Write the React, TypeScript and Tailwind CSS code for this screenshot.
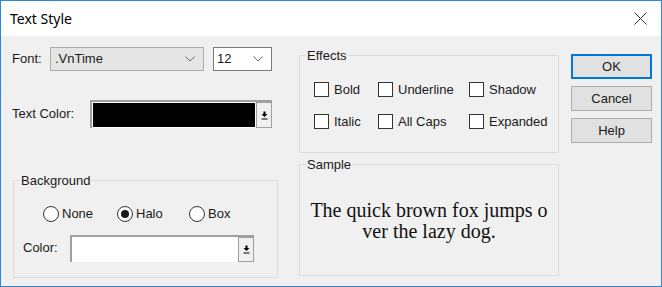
import React from 'react';

const Chevron: React.FC = () => (
  <svg width="10" height="6" viewBox="0 0 10 6" className="shrink-0">
    <polyline points="0.5,0.5 5,5 9.5,0.5" fill="none" stroke="#6b6b6b" strokeWidth="1" />
  </svg>
);

const DropButton: React.FC = () => (
  <div className="flex h-full w-[16px] shrink-0 items-center justify-center border border-[#a0a0a0] bg-[#f0f0f0]">
    <svg width="7" height="9" viewBox="0 0 7 9">
      <path d="M3.5 6 L0.5 3 H2.5 V0.5 H4.5 V3 H6.5 Z" fill="#000" />
      <rect x="0.5" y="7.5" width="6" height="1" fill="#000" />
    </svg>
  </div>
);

const Check: React.FC<{ label: string }> = ({ label }) => (
  <label className="flex items-center gap-[5px]">
    <span className="h-[15px] w-[15px] border border-[#333] bg-white" />
    <span>{label}</span>
  </label>
);

const Radio: React.FC<{ label: string; checked?: boolean }> = ({ label, checked }) => (
  <label className="flex items-center gap-[3px]">
    <span className="flex h-[16px] w-[16px] items-center justify-center rounded-full border border-[#333] bg-white">
      {checked && <span className="h-[8px] w-[8px] rounded-full bg-[#1a1a1a]" />}
    </span>
    <span>{label}</span>
  </label>
);

const Group: React.FC<{ title: string; className: string; children: React.ReactNode }> = ({
  title,
  className,
  children,
}) => (
  <fieldset className={`border border-[#dcdcdc] ${className}`}>
    <legend className="ml-[6px] px-[1px] leading-[15px]">{title}</legend>
    {children}
  </fieldset>
);

const App: React.FC = () => (
  <div
    className="flex h-[287px] w-[662px] flex-col border border-[#2b87d3] bg-[#f0f0f0] text-[13px] text-[#1a1a1a]"
    style={{ fontFamily: '"Liberation Sans", Arial, sans-serif' }}
  >
    <div className="flex h-[35px] shrink-0 items-center justify-between bg-white pl-[9px] pr-[14px]">
      <span className="text-[14px] text-black" style={{ fontFamily: '"Noto Sans", sans-serif' }}>
        Text Style
      </span>
      <svg width="13" height="13" viewBox="0 0 13 13">
        <path d="M0.5 0.5 L12.5 12.5 M12.5 0.5 L0.5 12.5" stroke="#333" strokeWidth="1" />
      </svg>
    </div>

    <div className="flex flex-1">
      {/* left column */}
      <div className="ml-[11px] flex w-[266px] flex-col">
        <div className="mt-[11px] flex h-[24px] items-center">
          <span className="w-[38px]">Font:</span>
          <div className="flex h-full w-[154px] items-center justify-between border border-[#adadad] bg-[#e5e5e5] pl-[4px] pr-[8px]">
            <span>.VnTime</span>
            <Chevron />
          </div>
          <div className="ml-[9px] flex h-full w-[59px] items-center justify-between border border-[#7a7a7a] bg-white pl-[3px] pr-[8px]">
            <span>12</span>
            <Chevron />
          </div>
        </div>

        <div className="mt-[29px] flex h-[28px] items-center">
          <span className="w-[78px]">Text Color:</span>
          <div className="flex h-full w-[182px] border-l-2 border-t-2 border-l-[#a0a0a0] border-t-[#a0a0a0] bg-white">
            <div className="my-[1px] ml-[1px] flex-1 bg-black" />
            <div className="ml-[1px]">
              <DropButton />
            </div>
          </div>
        </div>

        <Group title="Background" className="ml-[1px] mt-[45px] h-[105px] w-[265px]">
          <div className="mt-[16px] flex items-center pl-[29px]">
            <div className="w-[74px]">
              <Radio label="None" />
            </div>
            <div className="w-[72px]">
              <Radio label="Halo" checked />
            </div>
            <Radio label="Box" />
          </div>
          <div className="mt-[11px] flex h-[27px] items-center pl-[9px]">
            <span className="w-[47px]">Color:</span>
            <div className="flex h-full w-[184px] border-l-2 border-t-2 border-l-[#a0a0a0] border-t-[#a0a0a0] bg-white">
              <div className="flex-1" />
              <DropButton />
            </div>
          </div>
        </Group>
      </div>

      {/* middle column */}
      <div className="ml-[21px] flex w-[260px] flex-col">
        <Group title="Effects" className="mt-[12px] h-[105px]">
          <div className="mt-[17px] grid grid-cols-[64px_91px_1fr] gap-y-[12px] pl-[14px]">
            <Check label="Bold" />
            <Check label="Underline" />
            <Check label="Shadow" />
            <Check label="Italic" />
            <Check label="All Caps" />
            <Check label="Expanded" />
          </div>
        </Group>
        <Group title="Sample" className="mt-[4px] h-[119px]">
          <div
            className="flex h-[98px] flex-col items-center justify-center text-[20px] leading-[21px] text-[#111]"
            style={{ fontFamily: '"Liberation Serif", "Times New Roman", serif' }}
          >
            <span>The quick brown fox jumps o</span>
            <span>ver the lazy dog.</span>
          </div>
        </Group>
      </div>

      {/* buttons */}
      <div className="ml-[12px] mt-[18px] flex w-[81px] flex-col gap-[7px]">
        <button className="h-[25px] border-2 border-[#0078d7] bg-[#e1e1e1]">OK</button>
        <button className="h-[25px] border border-[#adadad] bg-[#e1e1e1]">Cancel</button>
        <button className="h-[25px] border border-[#adadad] bg-[#e1e1e1]">Help</button>
      </div>
    </div>
  </div>
);

export default App;
